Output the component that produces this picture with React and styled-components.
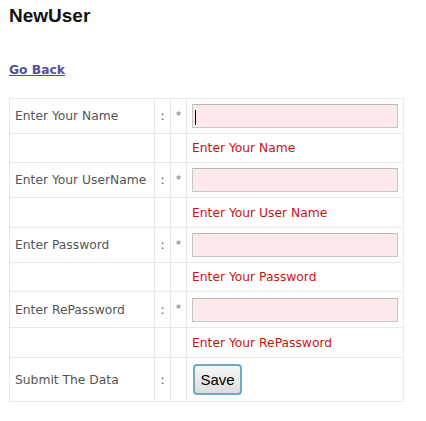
import styled, { createGlobalStyle } from 'styled-components';

const GlobalStyle = createGlobalStyle`
    html, body {
        margin: 0;
        padding: 0;
        background: #fff;
    }
`;

const Page = styled.div`
    padding: 4px 9px 0;
    font-family: "DejaVu Sans", Verdana, sans-serif;
`;

const Title = styled.h1`
    margin: 0;
    font-family: "Liberation Sans", Arial, sans-serif;
    font-size: 19px;
    line-height: 24px;
    font-weight: bold;
    color: #111;
`;

const BackLink = styled.a`
    display: inline-block;
    margin: 34px 0 0;
    font-size: 12.3px;
    line-height: 16px;
    font-weight: bold;
    color: #4f4f9f;
    text-decoration: underline;
    cursor: pointer;
`;

const FormTable = styled.div`
    margin-top: 20px;
    width: 393px;
    padding: 1px;
    display: flex;
    flex-direction: column;
    gap: 1px;
    background: #e8e8e8;
`;

const Row = styled.div`
    display: grid;
    grid-template-columns: 144px 15px 15px 216px;
    gap: 1px;
    height: ${({$height}) => $height}px;
`;

const Cell = styled.div`
    background: #fff;
    display: flex;
    align-items: center;
    font-size: 12.3px;
    color: #555;
    white-space: nowrap;
    padding-left: ${({$pad}) => $pad ?? 0}px;
    justify-content: ${({$center}) => $center ? 'center' : 'flex-start'};
`;

const Mark = styled.span`
    align-self: ${({$top}) => $top ? 'flex-start' : 'center'};
    margin-top: ${({$top}) => $top ? 10 : 0}px;
    font-size: ${({$top}) => $top ? 11 : 12.3}px;
    color: ${({$top}) => $top ? '#777' : '#555'};
`;

const InputWrap = styled.div`
    position: relative;
    display: flex;
`;

const Field = styled.input`
    box-sizing: border-box;
    width: 206px;
    height: 24px;
    margin: 0;
    padding: 0 4px;
    border: 1px solid #c6c6c6;
    border-top-color: #b8b8b8;
    background: #fde9e9;
    font-family: "DejaVu Sans", Verdana, sans-serif;
    font-size: 12px;
    outline: none;
`;

const Caret = styled.span`
    position: absolute;
    left: 3px;
    top: 6px;
    width: 1px;
    height: 15px;
    background: #000;
`;

const ErrorText = styled.span`
    color: #cc1111;
    font-size: 12.3px;
`;

const SaveButton = styled.button`
    box-sizing: border-box;
    margin-left: 1px;
    width: 49px;
    height: 31px;
    padding: 0;
    border: 2px solid #6fa9c6;
    border-radius: 4px;
    background: linear-gradient(#f7f7f7, #dcdcdc);
    font-family: "Liberation Sans", Arial, sans-serif;
    font-size: 15px;
    color: #000;
`;

const fields = [
    { label: 'Enter Your Name', error: 'Enter Your Name', type: 'text', focused: true },
    { label: 'Enter Your UserName', error: 'Enter Your User Name', type: 'text' },
    { label: 'Enter Password', error: 'Enter Your Password', type: 'password' },
    { label: 'Enter RePassword', error: 'Enter Your RePassword', type: 'password' },
];

export default function App() {
    return (
        <>
            <GlobalStyle />
            <Page>
                <Title>NewUser</Title>
                <BackLink>Go Back</BackLink>
                <FormTable>
                    {fields.map((f, i) => (
                        <div key={f.label} style={{display: 'contents'}}>
                            <Row $height={i === 3 ? 35 : 34}>
                                <Cell $pad={5}>{f.label}</Cell>
                                <Cell $center><Mark>:</Mark></Cell>
                                <Cell $center><Mark $top>*</Mark></Cell>
                                <Cell $pad={5}>
                                    <InputWrap>
                                        <Field type={f.type} />
                                        {f.focused && <Caret />}
                                    </InputWrap>
                                </Cell>
                            </Row>
                            <Row $height={i % 2 === 0 ? 28 : 29}>
                                <Cell />
                                <Cell />
                                <Cell />
                                <Cell $pad={5}><ErrorText>{f.error}</ErrorText></Cell>
                            </Row>
                        </div>
                    ))}
                    <Row $height={43}>
                        <Cell $pad={5}>Submit The Data</Cell>
                        <Cell $center><Mark>:</Mark></Cell>
                        <Cell />
                        <Cell $pad={5}><SaveButton>Save</SaveButton></Cell>
                    </Row>
                </FormTable>
            </Page>
        </>
    );
}
